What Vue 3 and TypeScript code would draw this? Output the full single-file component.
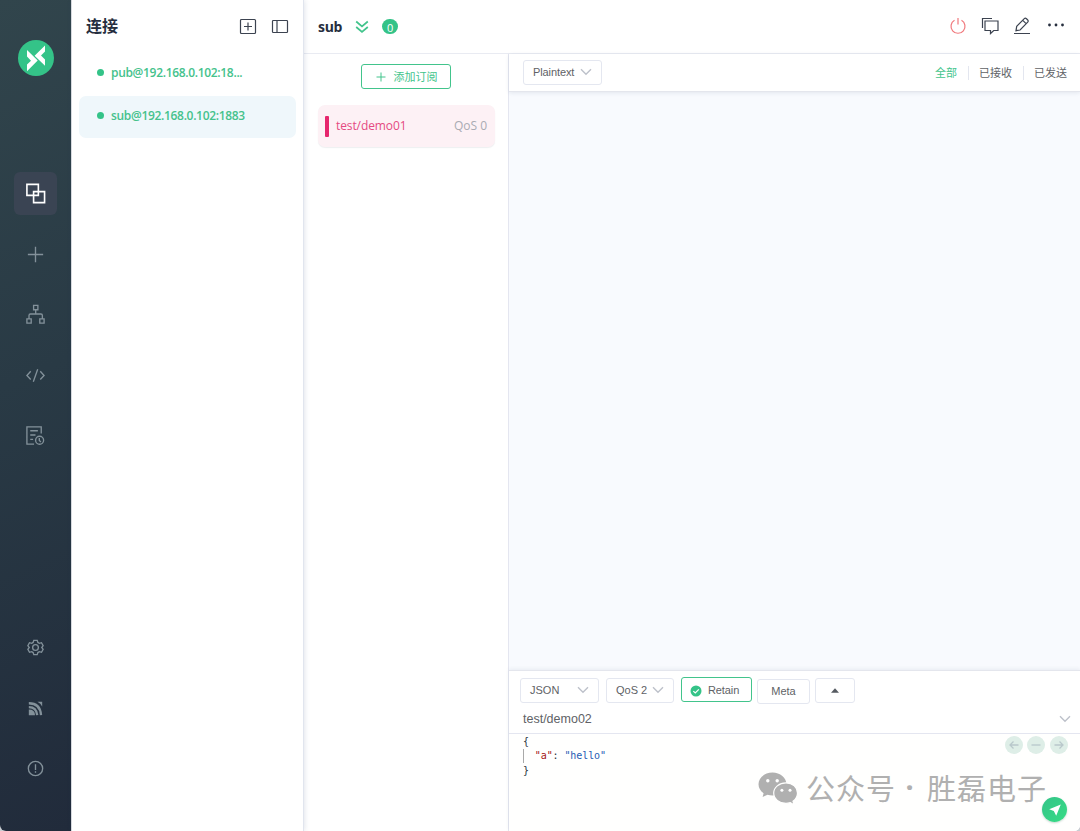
<script setup lang="ts">
import { ref } from 'vue'

interface Connection {
  id: string
  label: string
}

const connections: Connection[] = [
  { id: 'pub', label: 'pub@192.168.0.102:18...' },
  { id: 'sub', label: 'sub@192.168.0.102:1883' },
]
const activeConnection = ref('sub')

const filters: string[] = ['全部', '已接收', '已发送']
const activeFilter = ref('全部')
</script>

<template>
  <div class="window">
    <nav class="sidebar">
      <svg class="logo" viewBox="0 0 36 36">
        <circle cx="18" cy="18" r="18" fill="#34c388" />
        <path d="M9 10 19.700 20.600 9 31.300V24.600L13 20.700 9 16.500Z" fill="#fff" />
        <path d="M27 5.500V11.600L23 15.600 27 19.600V25.800L16.600 15.800Z" fill="#fff" />
      </svg>
      <div class="group top">
        <a class="nav active">
          <svg viewBox="0 0 22 22"><path d="M2 1.500h12v11.500H2zM9 9h11.500v11.500H9z" /></svg>
        </a>
        <a class="nav">
          <svg viewBox="0 0 22 22"><path d="M11 3v16M3 11h16" /></svg>
        </a>
        <a class="nav">
          <svg viewBox="0 0 22 22"><path d="M9 1.500h4.500v4.500H9zM2 15.500h4.500v4.500H2zM15.500 15.500H20v4.500h-4.500zM11.200 6v4.500M4.200 15.500v-3.500q0-1.500 1.500-1.500h11q1.500 0 1.500 1.500v3.500" /></svg>
        </a>
        <a class="nav">
          <svg viewBox="0 0 22 22"><path d="M6 6.500 2 11l4 4.200M16 6.500l4 4.500-4 4.200M13.300 4.500 8.700 17.500" /></svg>
        </a>
        <a class="nav">
          <svg viewBox="0 0 22 22"><path d="M17 9V2H2v18h7.500M5.500 6h8M5.500 10.500h5.500M5.500 15h3" /><circle cx="15.300" cy="16" r="4.200" /><path d="M15 13.700V16.300l1.700 1.500" /></svg>
        </a>
      </div>
      <div class="group bottom">
        <a class="nav">
          <svg viewBox="0 0 22 22"><path d="M9.200 3.500h3.600l.7 2.200 1.500.9 2.300-.6 1.700 3-1.500 2 1.500 2-1.700 3-2.300-.6-1.500.9-.7 2.200H9.200l-.7-2.200-1.500-.9-2.300.6-1.700-3L4.500 11 3 9l1.700-3 2.300.6 1.500-.9Z" /><circle cx="11" cy="11" r="3" /></svg>
        </a>
        <a class="nav">
          <svg viewBox="0 0 22 22"><g class="feed"><path d="M4 5.500Q16 5.500 16.800 18M4 9.500Q12 9.500 12.800 18" /><path class="solid" d="M4 12q6.500 0 6.500 6H4zM13 4H18v5Q16.500 5.500 13 4Z" /></g></svg>
        </a>
        <a class="nav">
          <svg viewBox="0 0 22 22"><circle cx="11" cy="11" r="7.500" /><path d="M11 6.500v6M11 14v1.500" /></svg>
        </a>
      </div>
    </nav>

    <aside class="connections">
      <header>
        <h1>连接</h1>
        <svg class="tool" viewBox="0 0 18 18"><rect x="1.500" y="1.500" width="15" height="14" rx="1" /><path d="M5 8.500h8M9 4.500v8" /></svg>
        <svg class="tool" viewBox="0 0 18 18"><rect x="1.500" y="2.500" width="15" height="12" rx=".8" /><path d="M6 2.500v12" /></svg>
      </header>
      <div
        v-for="c in connections"
        :key="c.id"
        class="connection"
        :class="{ selected: c.id === activeConnection }"
        @click="activeConnection = c.id"
      >
        <i class="dot"></i><span>{{ c.label }}</span>
      </div>
    </aside>

    <main>
      <header class="topbar">
        <h2>sub</h2>
        <svg class="double" viewBox="0 0 14 14"><path d="m1.200 1.500 5.800 5 5.800-5M1.200 7l5.800 5 5.800-5" /></svg>
        <span class="badge">0</span>
        <div class="actions">
          <svg class="power" viewBox="0 0 18 18"><path d="M5.500 3.200a7 7 0 1 0 7 0M9 1v6.500" /></svg>
          <svg viewBox="0 0 18 18"><path d="M1.500 11V1.500h9.500M4 4h13v9.500h-4.300l-3.200 3v-3H4z" /></svg>
          <svg viewBox="0 0 18 18"><path d="M1 16.500h16M3 13.700l.7-4.300L11.300 1.600q1-.9 2.200.2l1.200 1.200q1 1.100 0 2.200L7.100 13ZM9.800 3.300l3.300 3.300" /></svg>
          <svg class="more" viewBox="0 0 18 18"><circle cx="2.500" cy="8" r="1.400" /><circle cx="9" cy="8" r="1.400" /><circle cx="15.500" cy="8" r="1.400" /></svg>
        </div>
      </header>
      <div class="body">
        <section class="subscriptions">
          <button class="subscribe">
            <svg viewBox="0 0 10 10"><path d="M5 .5v9M.5 5h9" /></svg><span>添加订阅</span>
          </button>
          <div class="topic">
            <i></i><span class="name">test/demo01</span><span class="qos">QoS 0</span>
          </div>
        </section>
        <section class="content">
          <div class="filterbar">
            <div class="select format">Plaintext<svg class="chevron" viewBox="0 0 12 8"><path d="m1 1.200 5 5 5-5" /></svg></div>
            <div class="filters">
              <a v-for="f in filters" :key="f" :class="{ on: f === activeFilter }" @click="activeFilter = f">{{ f }}</a>
            </div>
          </div>
          <div class="messages"></div>
          <div class="publish">
            <div class="options">
              <div class="select json">JSON<svg class="chevron" viewBox="0 0 12 8"><path d="m1 1.200 5 5 5-5" /></svg></div>
              <div class="select level">QoS 2<svg class="chevron" viewBox="0 0 12 8"><path d="m1 1.200 5 5 5-5" /></svg></div>
              <div class="select retain">
                <svg viewBox="0 0 12 12"><circle cx="6" cy="6" r="5.500" fill="#34c388" /><path d="m3.300 6.100 2 1.900 3.500-3.700" fill="none" stroke="#fff" stroke-width="1.200" /></svg>Retain
              </div>
              <div class="select meta">Meta</div>
              <div class="select collapse"><svg viewBox="0 0 8 5"><path d="M0 4.800 4 .3l4 4.500z" fill="#555a61" /></svg></div>
            </div>
            <div class="target">
              test/demo02
              <svg class="chevron" viewBox="0 0 12 8"><path d="m1 1.200 5 5 5-5" /></svg>
            </div>
            <div class="editor">
              <pre><span class="brace">{</span>
<span class="guide"></span>  <span class="key">"a"</span>: <span class="value">"hello"</span>
<span class="brace">}</span></pre>
              <div class="history">
                <svg viewBox="0 0 18 18"><circle cx="9" cy="9" r="9" /><path d="M13.500 9h-8M8.500 5.500 5 9l3.500 3.500" /></svg>
                <svg viewBox="0 0 18 18"><circle cx="9" cy="9" r="9" /><path d="M4.500 9h9" /></svg>
                <svg viewBox="0 0 18 18"><circle cx="9" cy="9" r="9" /><path d="M4.500 9h8M9.500 5.500 13 9l-3.500 3.500" /></svg>
              </div>
              <div class="watermark">
                <svg viewBox="0 0 40 33">
                  <path d="M14.500.5C6.800.5.500 5.700.500 12.300c0 3.700 2 6.800 5.100 9L4.600 25l4.900-2.300c1.700.5 3.300.8 5 .8 7.700 0 14-5 14-11.200S22.200.5 14.500.5Z" fill="#b0b0b0" />
                  <path d="M28 10.900c-6.900 0-12.300 4.500-12.300 10.200S21.100 31.400 28 31.400c1.500 0 2.900-.3 4.300-.7l3.700 2-1-3.400c2.800-1.900 4.500-4.900 4.500-8.200 0-5.700-4.700-10.200-11.500-10.200Z" fill="#b0b0b0" stroke="#fffffe" stroke-width="1.200" />
                  <g fill="#fff"><circle cx="9.800" cy="8.700" r="1.700" /><circle cx="19.200" cy="8.700" r="1.700" /><circle cx="23.900" cy="18.300" r="1.500" /><circle cx="32" cy="18.300" r="1.500" /></g>
                </svg>
                <span class="account">公众号</span><span class="sep">·</span><span class="account">胜磊电子</span>
              </div>
              <button class="send">
                <svg viewBox="0 0 12 12"><path d="M11.800.4.200 5.200 4.800 7.100 7.200 11.700Z" fill="#fff" /></svg>
              </button>
            </div>
          </div>
        </section>
      </div>
    </main>
  </div>
</template>

<style>
body {
  margin: 0;
  background: #c9ced3;
}
</style>

<style scoped>
* {
  box-sizing: border-box;
}
svg {
  display: block;
  flex: none;
}
.window {
  width: 1080px;
  height: 831px;
  display: flex;
  overflow: hidden;
  border-radius: 0 0 6px 6px;
  background: #fff;
  font-family: "Open Sans", "Noto Sans CJK SC", sans-serif;
}
.sidebar {
  width: 71px;
  background: linear-gradient(155deg, #31454c 0%, #293a45 45%, #212b3b 100%);
  display: flex;
  flex-direction: column;
  align-items: center;
  padding: 40px 0 40.600px;
}
.logo {
  width: 36px;
  height: 36px;
}
.group {
  display: flex;
  flex-direction: column;
  gap: 17.600px;
}
.top {
  margin-top: 96px;
}
.bottom {
  margin-top: auto;
}
.nav {
  width: 43px;
  height: 43px;
  border-radius: 6px;
  display: grid;
  place-items: center;
}
.nav svg {
  width: 21px;
  height: 21px;
  fill: none;
  stroke: #83919a;
  stroke-width: 1.400;
}
.nav.active {
  background: #3a4453;
}
.nav.active svg {
  stroke: #fff;
  stroke-width: 1.700;
}
.feed {
  stroke-width: 2.400;
}
.feed .solid {
  fill: #83919a;
  stroke: none;
}
.connections {
  width: 233px;
  border-left: 1px solid #d6d9de;
  border-right: 1px solid #e1e5ee;
  box-shadow: 1px 0 5px rgba(40, 60, 110, 0.13);
  z-index: 1;
  padding: 0 7px;
}
.connections header {
  height: 53px;
  display: flex;
  align-items: center;
  padding: 0 7px 0 7px;
}
h1 {
  margin: 0 auto 0 0;
  padding-bottom: 1px;
  font-size: 16px;
  line-height: 24px;
  font-weight: 700;
  color: #262e3e;
}
.tool {
  width: 18px;
  height: 18px;
  margin-left: 14px;
  fill: none;
  stroke: #3c4350;
  stroke-width: 1.200;
}
.connection {
  height: 42px;
  display: flex;
  align-items: center;
  padding: 0 0 3px 18px;
  margin-bottom: 1px;
  border-radius: 7px;
  font-size: 12px;
  font-weight: 600;
  color: #45c28c;
  letter-spacing: -0.320px;
}
.connection.selected {
  background: #eff7fb;
}
.dot {
  width: 7px;
  height: 7px;
  border-radius: 50%;
  background: #34c388;
  margin-right: 7px;
}
main {
  flex: 1;
  min-width: 0;
  display: flex;
  flex-direction: column;
}
.topbar {
  height: 54px;
  border-bottom: 1px solid #e9ebf2;
  display: flex;
  align-items: center;
  padding: 0 15px 0 14px;
}
h2 {
  margin: 0;
  font-size: 14px;
  font-weight: 700;
  letter-spacing: -0.300px;
  color: #262e3e;
}
.double {
  width: 14px;
  height: 14px;
  margin-left: 13px;
  fill: none;
  stroke: #42c48c;
  stroke-width: 1.700;
}
.badge {
  width: 16px;
  height: 15px;
  margin-left: 13px;
  border-radius: 8px;
  background: #34c388;
  color: #fff;
  font: 11px/17px "Open Sans", sans-serif;
  text-align: center;
}
.actions {
  margin-left: auto;
  display: flex;
  gap: 14px;
  padding-bottom: 2px;
}
.actions svg {
  width: 18px;
  height: 18px;
  fill: none;
  stroke: #3c4350;
  stroke-width: 1.200;
}
.actions .power {
  stroke: #f0787c;
}
.actions .more {
  fill: #262e3e;
  stroke: none;
  margin-left: 2px;
}
.body {
  flex: 1;
  display: flex;
  min-height: 0;
}
.subscriptions {
  width: 205px;
  border-right: 1px solid #e4e6f0;
  padding: 10px 13px 0 14px;
}
.subscribe {
  width: 90px;
  height: 25px;
  margin: 0 auto 16px 43px;
  display: flex;
  align-items: center;
  justify-content: center;
  gap: 8px;
  padding: 0 0 0 1px;
  border: 1px solid #42c48c;
  border-radius: 3px;
  background: #fff;
  color: #42c48c;
  font: 11px "Open Sans", "Noto Sans CJK SC", sans-serif;
}
.subscribe span {
  padding-bottom: 2px;
}
.subscribe svg {
  width: 10px;
  height: 10px;
  stroke: currentColor;
}
.topic {
  width: 177px;
  height: 42px;
  display: flex;
  align-items: center;
  padding: 0 8px 0 7px;
  border-radius: 7px;
  background: #fdf1f5;
  box-shadow: 0 1px 1px rgba(40, 60, 80, 0.08);
  font-size: 12px;
}
.topic i {
  width: 4px;
  height: 21px;
  border-radius: 1px;
  background: #e6266d;
  margin-right: 7px;
}
.topic span {
  padding-bottom: 1px;
}
.name {
  color: #e54a82;
  letter-spacing: -0.100px;
}
.qos {
  margin-left: auto;
  color: #a9abb3;
}
.content {
  flex: 1;
  min-width: 0;
  display: flex;
  flex-direction: column;
}
.filterbar {
  height: 38px;
  display: flex;
  align-items: center;
  justify-content: space-between;
  padding: 0 12px 0 14px;
  border-bottom: 1px solid #e4e6ed;
  box-shadow: 0 1px 4px rgba(40, 60, 100, 0.1);
  z-index: 1;
}
.select {
  height: 25px;
  display: flex;
  align-items: center;
  justify-content: space-between;
  border: 1px solid #e4e7f0;
  border-radius: 3px;
  background: #fff;
  color: #606266;
  padding-bottom: 1px;
  font: 11px "Liberation Sans", Arial, sans-serif;
}
.chevron {
  width: 12px;
  height: 8px;
  fill: none;
  stroke: #bdc1ca;
  stroke-width: 1.400;
}
.format {
  width: 79px;
  padding: 0 9px 1px;
  margin-bottom: 1px;
  letter-spacing: -0.100px;
}
.filters {
  display: flex;
  align-items: center;
  padding: 1px 1px 0 0;
}
.filters a {
  padding: 0 11px 0 10px;
  border-left: 1px solid #e3e6ef;
  color: #606266;
  font-size: 11px;
  line-height: 14px;
}
.filters a:first-child {
  border: 0;
}
.filters a:last-child {
  padding-right: 0;
}
.filters .on {
  color: #42c48c;
}
.messages {
  flex: 1;
  background: #f8fafe;
}
.publish {
  height: 161px;
  display: flex;
  flex-direction: column;
  border-top: 1px solid #e4e6ed;
  box-shadow: 0 -1px 4px rgba(40, 60, 100, 0.08);
  background: #fff;
}
.options {
  height: 34px;
  display: flex;
  align-items: flex-start;
  padding: 7px 0 0 11px;
}
.json {
  width: 79px;
  padding: 0 9px 1px;
}
.level {
  width: 68px;
  margin-left: 7px;
  padding: 0 9px 1px;
}
.retain {
  width: 71px;
  margin: -1px 0 0 7px;
  border-color: #42c48c;
  padding: 0 13px 0 8px;
  justify-content: flex-start;
  gap: 6px;
  letter-spacing: -0.100px;
}
.retain svg {
  width: 12px;
  height: 12px;
  margin-top: 2px;
}
.meta {
  width: 53px;
  margin: 1px 0 0 5px;
  justify-content: center;
}
.collapse {
  width: 40px;
  margin-left: 5px;
  justify-content: center;
}
.collapse svg {
  width: 8px;
  height: 5px;
}
.target {
  height: 29px;
  display: flex;
  align-items: center;
  justify-content: space-between;
  padding: 0 9px 0 14px;
  border-bottom: 1px solid #e4e6f0;
  color: #606266;
  font: 12.500px "Liberation Sans", Arial, sans-serif;
}
.editor {
  flex: 1;
  background: #fffffe;
  position: relative;
}
pre {
  margin: 0;
  padding: 1px 0 0 14px;
  font: 10px/14.300px "DejaVu Sans Mono", monospace;
  letter-spacing: -0.100px;
  color: #28343c;
}
.guide {
  display: inline-block;
  width: 1px;
  height: 14px;
  margin-right: -1px;
  background: #a9a9a9;
  vertical-align: top;
}
.key {
  color: #a31515;
}
.value {
  color: #1f5cb4;
}
.history {
  position: absolute;
  top: 2px;
  right: 12.500px;
  display: flex;
  gap: 4.300px;
}
.history svg {
  width: 18px;
  height: 18px;
  fill: #deeee7;
  stroke: #b9c8cb;
  stroke-width: 1.300;
}
.history circle {
  stroke: none;
}
.history path {
  fill: none;
}
.watermark {
  position: absolute;
  left: 249px;
  top: 32px;
  height: 42px;
  display: flex;
  align-items: center;
  color: #b0b0b0;
  font-family: "Noto Sans CJK SC", sans-serif;
  font-size: 29px;
  line-height: 42px;
  white-space: nowrap;
}
.watermark svg {
  width: 40px;
  height: 33px;
  margin: 2px 8px 0 0;
}
.account {
  letter-spacing: 1px;
}
.sep {
  width: 31px;
  padding-right: 4px;
  font-family: "Noto Sans", sans-serif;
  font-weight: 700;
  text-align: center;
}
.send {
  position: absolute;
  right: 13px;
  bottom: 9px;
  width: 25px;
  height: 25px;
  padding: 0;
  border: 0;
  border-radius: 50%;
  display: grid;
  place-items: center;
  background: linear-gradient(135deg, #34c388, #37dc85);
  box-shadow: 0 1px 2px rgba(30, 100, 70, 0.25);
}
.send svg {
  width: 12px;
  height: 12px;
}
</style>
